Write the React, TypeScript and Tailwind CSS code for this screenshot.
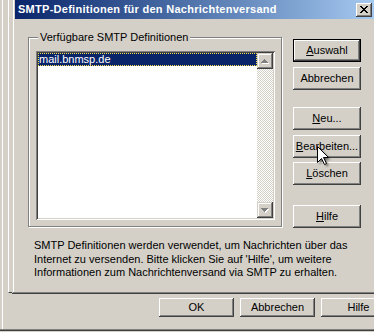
import React from "react";

const raised =
  "shadow-[inset_-1px_-1px_0_#404040,inset_1px_1px_0_#fff,inset_-2px_-2px_0_#808080]";

function WinButton({
  children,
  isDefault = false,
  className = "",
}: {
  children: React.ReactNode;
  isDefault?: boolean;
  className?: string;
}) {
  return (
    <div
      className={`flex items-center justify-center bg-[#d4d0c8] text-[11px] leading-[13px] text-black ${
        isDefault ? "border border-black" : ""
      } ${raised} ${className}`}
    >
      {children}
    </div>
  );
}

function Key({ children }: { children: React.ReactNode }) {
  return <span className="underline underline-offset-[1px]">{children}</span>;
}

function ScrollArrow({ down = false }: { down?: boolean }) {
  return (
    <div className="flex h-[16px] w-[16px] items-center justify-center bg-[#d4d0c8] shadow-[inset_-1px_-1px_0_#404040,inset_1px_1px_0_#d4d0c8,inset_-2px_-2px_0_#808080,inset_2px_2px_0_#fff]">
      <svg width="8" height="5" viewBox="0 0 8 5" shapeRendering="crispEdges">
        {down ? (
          <>
            <polygon points="1,1 8,1 4.5,5" fill="#fff" />
            <polygon points="0,0 7,0 3.5,4" fill="#808080" />
          </>
        ) : (
          <>
            <polygon points="4.5,1 8,5 1,5" fill="#fff" />
            <polygon points="3.5,0 7,4 0,4" fill="#808080" />
          </>
        )}
      </svg>
    </div>
  );
}

function CloseButton() {
  return (
    <div className="flex h-[14px] w-[16px] items-center justify-center bg-[#d4d0c8] shadow-[inset_-1px_-1px_0_#404040,inset_1px_1px_0_#fff,inset_-2px_-2px_0_#808080]">
      <svg width="8" height="7" viewBox="0 0 8 7" shapeRendering="crispEdges">
        <path d="M0.5 0 L7.5 7 M7.5 0 L0.5 7" stroke="#000" strokeWidth="1.8" />
      </svg>
    </div>
  );
}

function Cursor() {
  return (
    <svg
      className="absolute left-[316px] top-[145px]"
      width="18"
      height="24"
      viewBox="0 0 18 24"
    >
      <defs>
        <filter id="soft" x="-50%" y="-50%" width="200%" height="200%">
          <feGaussianBlur stdDeviation="1.2" />
        </filter>
      </defs>
      <path
        d="M3.5 3.5 V19.5 L7.5 15.5 L10.5 21.5 L12.5 20.5 L9.5 14.5 H14.5 Z"
        fill="#000"
        opacity="0.55"
        filter="url(#soft)"
      />
      <path
        d="M1.5 1.5 V17.5 L5.5 13.5 L8.5 19.5 L10.5 18.5 L7.5 12.5 H12.5 Z"
        fill="#fff"
        stroke="#000"
        strokeWidth="1"
      />
    </svg>
  );
}

export default function App() {
  return (
    <div className="relative flex h-[332px] w-[374px] flex-col overflow-hidden bg-[#d4d0c8] font-['Liberation_Sans',Arial,sans-serif] text-[11px] text-black">
      {/* parent window behind the dialog */}
      <div className="ml-[2px] flex h-[329px] flex-col border-l border-white">
        <div className="flex h-[296px]">
          <div className="ml-[5px] h-[293px] w-[6px] border-b border-l border-b-[#404040] border-l-white" />
        </div>
        <div className="flex gap-[6px] pl-[156px] pt-[2px]">
          <WinButton className="h-[19px] w-[75px] shrink-0">OK</WinButton>
          <WinButton className="h-[19px] w-[75px] shrink-0">Abbrechen</WinButton>
          <WinButton className="h-[19px] w-[75px] shrink-0">Hilfe</WinButton>
        </div>
      </div>
      <div className="h-px bg-[#808080]" />
      <div className="h-px bg-[#404040]" />

      {/* dialog */}
      <div className="absolute left-[12px] top-[-3px] h-[297px] w-[366px] bg-[#d4d0c8] p-[3px] shadow-[inset_-1px_-1px_0_#404040,inset_1px_1px_0_#d4d0c8,inset_-2px_-2px_0_#808080,inset_2px_2px_0_#fff]">
        <div className="flex h-[19px] items-center justify-between bg-gradient-to-r from-[#0a246a] to-[#a6caf0] pl-[3px] pr-[3px]">
          <span className="whitespace-nowrap text-[11px] font-bold leading-[13px] tracking-[0.27px] text-white">
            SMTP-Definitionen für den Nachrichtenversand
          </span>
          <CloseButton />
        </div>

        <div className="flex pl-[13px] pt-[18px]">
          <div className="flex w-[255px] flex-col">
            <div className="relative h-[190px] w-[254px] border border-[#808080] px-[7px] pt-[13px] shadow-[inset_1px_1px_0_#fff,1px_1px_0_#fff]">
              <span className="absolute left-[9px] top-[-7px] whitespace-nowrap bg-[#d4d0c8] px-[2px] leading-[13px]">
                Verfügbare SMTP Definitionen
              </span>
              <div className="flex h-[169px] w-[239px] bg-white p-[2px] shadow-[inset_1px_1px_0_#808080,inset_-1px_-1px_0_#fff,inset_2px_2px_0_#404040,inset_-2px_-2px_0_#d4d0c8]">
                <div className="flex-1">
                  <div className="h-[13px] bg-[#0a246a] pl-[1px] leading-[13px] text-white outline-1 outline-offset-[-1px] outline-[#f5e04a] outline-dotted">
                    mail.bnmsp.de
                  </div>
                </div>
                <div className="flex w-[16px] flex-col">
                  <ScrollArrow />
                  <div className="flex-1 bg-[repeating-conic-gradient(#fff_0_25%,#d4d0c8_0_50%)] bg-[length:2px_2px]" />
                  <ScrollArrow down />
                </div>
              </div>
            </div>
            <p className="ml-[6px] mt-[12px] whitespace-nowrap leading-[13.5px]">
              SMTP Definitionen werden verwendet, um Nachrichten über das
              <br />
              Internet zu versenden. Bitte klicken Sie auf 'Hilfe', um weitere
              <br />
              Informationen zum Nachrichtenversand via SMTP zu erhalten.
            </p>
          </div>

          <div className="ml-[10px] mt-[2px] flex w-[68px] shrink-0 flex-col">
            <WinButton isDefault className="h-[23px]">
              <Key>A</Key>uswahl
            </WinButton>
            <WinButton className="mt-[5px] h-[23px]">Abbrechen</WinButton>
            <WinButton className="mt-[17px] h-[23px]">
              <Key>N</Key>eu...
            </WinButton>
            <WinButton className="mt-[5px] h-[23px]">
              <Key>B</Key>earbeiten...
            </WinButton>
            <WinButton className="mt-[4px] h-[23px]">
              <Key>L</Key>öschen
            </WinButton>
            <WinButton className="mt-[20px] h-[23px]">
              <Key>H</Key>ilfe
            </WinButton>
          </div>
        </div>
      </div>

      <Cursor />
    </div>
  );
}
